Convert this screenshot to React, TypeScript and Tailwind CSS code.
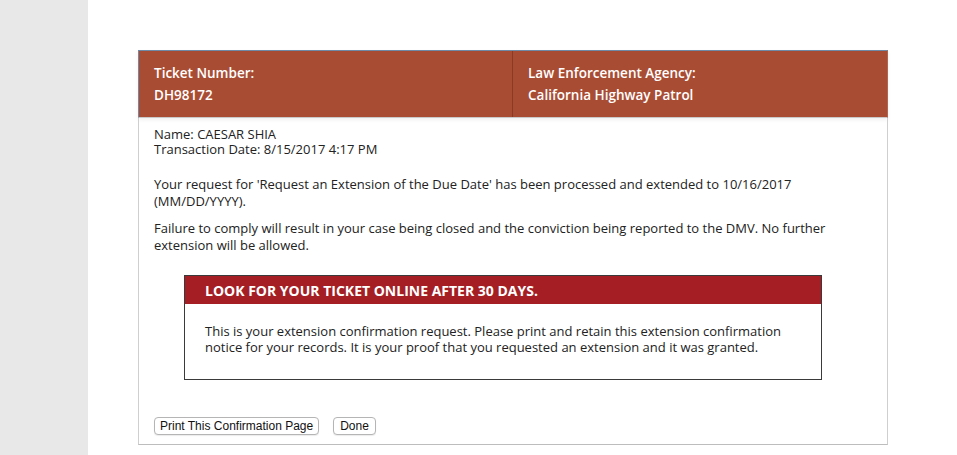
export default function App() {
  return (
    <div className="flex min-h-[455px] w-full bg-white font-['Open_Sans',sans-serif] text-[#222]">
      {/* Left rail */}
      <div className="w-[88px] shrink-0 bg-[#e8e8e8]" />

      {/* Main */}
      <div className="flex-1 pl-[50px] pt-[50px]">
        <div className="w-[750px]">
          {/* Header */}
          <div className="flex border border-[#6f8aa6] border-r-[#b0654f] border-b-[#c9c9c9] bg-[#a94c34] text-[13.5px] font-semibold leading-[22px] text-white shadow-[0_2px_4px_rgba(0,0,0,0.06)]">
            <div className="w-[374px] border-r border-[#8c3a22] px-[15px] pt-[11px] pb-[11px]">
              <div>Ticket Number:</div>
              <div>DH98172</div>
            </div>
            <div className="flex-1 px-[15px] pt-[11px] pb-[11px]">
              <div>Law Enforcement Agency:</div>
              <div>California Highway Patrol</div>
            </div>
          </div>

          {/* Body */}
          <div className="border border-t-0 border-[#cfcfcf] border-b-[#bdbdbd] px-[15px] pt-[9px] pb-[9px] text-[13px]">
            <div className="leading-[15px]">
              <div>Name: CAESAR SHIA</div>
              <div>Transaction Date: 8/15/2017 4:17 PM</div>
            </div>

            <p className="mt-[19px] leading-[17px]">
              Your request for 'Request an Extension of the Due Date' has been processed and extended to 10/16/2017 (MM/DD/YYYY).
            </p>
            <p className="mt-[10px] leading-[17px]">
              Failure to comply will result in your case being closed and the conviction being reported to the DMV. No further extension will be allowed.
            </p>

            {/* Notice box */}
            <div className="ml-[30px] mt-[21px] w-[638px] border border-[#3a3a3a]">
              <div className="flex h-[28px] items-center bg-[#a51e24] px-[20px] text-[14px] font-bold text-white">
                LOOK FOR YOUR TICKET ONLINE AFTER 30 DAYS.
              </div>
              <div className="px-[20px] pt-[19px] pb-[24px] leading-[16px]">
                This is your extension confirmation request. Please print and retain this extension confirmation notice for your records. It is your proof that you requested an extension and it was granted.
              </div>
            </div>

            {/* Buttons */}
            <div className="mt-[37px] flex gap-[14px] font-['Liberation_Sans',Arial,sans-serif] text-[12px]">
              <button className="h-[18px] rounded-[4px] border border-[#b5b5b5] bg-white px-[5px] leading-[16px] text-[#111] shadow-[0_1px_1px_rgba(0,0,0,0.08)]">
                Print This Confirmation Page
              </button>
              <button className="h-[18px] rounded-[4px] border border-[#b5b5b5] bg-white px-[6px] leading-[16px] text-[#111] shadow-[0_1px_1px_rgba(0,0,0,0.08)]">
                Done
              </button>
            </div>
          </div>
        </div>
      </div>
    </div>
  );
}
